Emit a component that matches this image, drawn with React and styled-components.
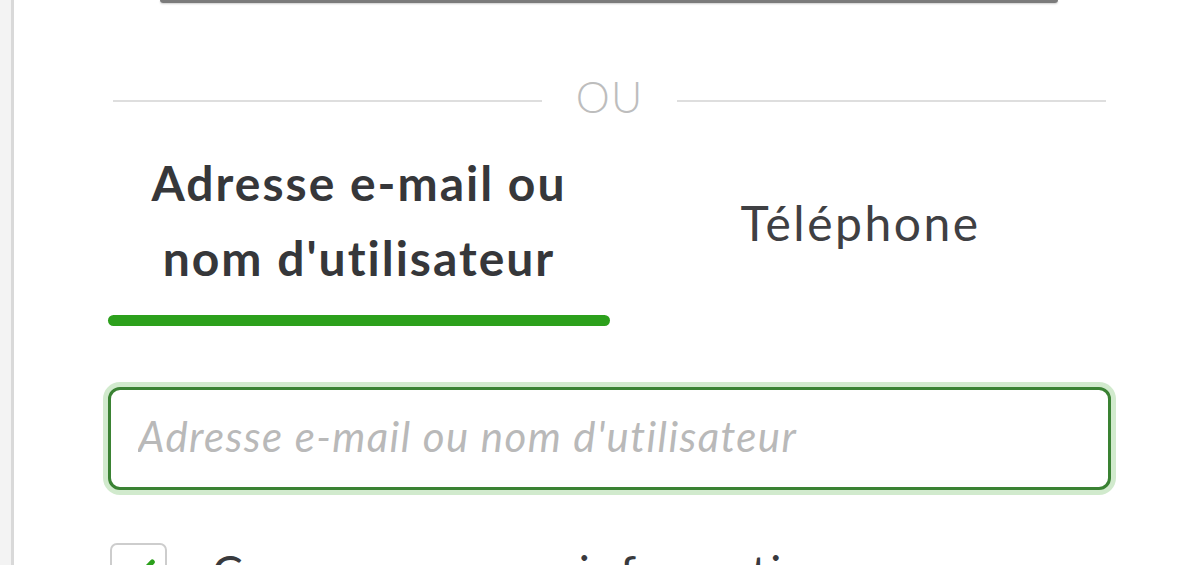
import styled, { createGlobalStyle } from "styled-components";

const GlobalStyle = createGlobalStyle`
  html, body {
    margin: 0;
    padding: 0;
    background: #ffffff;
    font-family: "Lato", "Noto Sans", sans-serif;
    color: #393a3d;
  }
`;

const Page = styled.div`
  display: flex;
  height: 565px;
  overflow: hidden;
`;

const Rail = styled.div`
  width: 11px;
  flex-shrink: 0;
  background: #f3f3f3;
  border-right: 3px solid #d9d9d9;
`;

const Panel = styled.div`
  flex: 1;
  display: block;
  padding: 0 89px 0 94px;
`;

const SsoButton = styled.div`
  height: 0;
  margin: 0 53px 0 52px;
  border-bottom: 3px solid #7b7b7b;
  border-radius: 0 0 8px 8px;
  box-shadow: 0 1px 2px rgba(0, 0, 0, 0.2);
`;

const Divider = styled.div`
  display: flex;
  align-items: center;
  gap: 34px;
  margin: 68px 5px 0 5px;
`;

const Rule = styled.div`
  flex: 1;
  height: 2px;
  background: #dedede;
`;

const DividerText = styled.span`
  font-size: 43px;
  line-height: 52px;
  margin-bottom: 8px;
  color: #bdbdbd;
  font-weight: 300;
  letter-spacing: 1px;
`;

const Tabs = styled.div`
  display: grid;
  grid-template-columns: 502px 1fr;
  margin-top: 14px;
`;

const Tab = styled.div`
  display: flex;
  flex-direction: column;
  align-items: center;
`;

const TabLabel = styled.div`
  height: 150px;
  box-sizing: border-box;
  display: flex;
  align-items: center;
  justify-content: center;
  text-align: center;
  font-size: 48px;
  line-height: 75px;
  font-weight: ${(p) => (p.$active ? 700 : 400)};
  letter-spacing: ${(p) => (p.$active ? "2px" : "2.5px")};
  color: ${(p) => (p.$active ? "#36373a" : "#3f4043")};
  padding-top: ${(p) => (p.$active ? "0" : "5px")};
`;

const TabBar = styled.div`
  align-self: stretch;
  height: 11px;
  margin-top: 20px;
  border-radius: 6px;
  background: ${(p) => (p.$active ? "#2ca01c" : "transparent")};
`;

const Field = styled.input`
  display: block;
  box-sizing: border-box;
  width: 100%;
  height: 103px;
  margin-top: 61px;
  padding: 0 27px 5px;
  border: 3px solid #3a8233;
  border-radius: 12px;
  box-shadow: 0 0 0 5px rgba(44, 160, 28, 0.22);
  outline: none;
  font-family: "Lato", "Noto Sans", sans-serif;
  font-size: 42px;
  letter-spacing: 1.4px;
  color: #393a3d;
  background: #fff;

  &::placeholder {
    color: #b9b9b9;
    font-style: italic;
  }
`;

const CheckRow = styled.label`
  display: flex;
  align-items: flex-start;
  gap: 45px;
  margin-top: 53px;
  margin-left: 2px;
`;

const Box = styled.span`
  width: 57px;
  height: 57px;
  flex-shrink: 0;
  box-sizing: border-box;
  border: 2px solid #cdcdcd;
  border-radius: 7px;
  display: flex;
  align-items: center;
  justify-content: center;
`;

const CheckText = styled.span`
  font-size: 46px;
  line-height: 58px;
  letter-spacing: 2.5px;
  word-spacing: 10px;
  color: #393a3d;
`;

export default function App() {
  return (
    <>
      <GlobalStyle />
      <Page>
        <Rail />
        <Panel>
          <SsoButton />
          <Divider>
            <Rule />
            <DividerText>OU</DividerText>
            <Rule />
          </Divider>
          <Tabs>
            <Tab>
              <TabLabel $active>
                Adresse e-mail ou
                <br />
                nom d'utilisateur
              </TabLabel>
              <TabBar $active />
            </Tab>
            <Tab>
              <TabLabel>Téléphone</TabLabel>
              <TabBar />
            </Tab>
          </Tabs>
          <Field placeholder="Adresse e-mail ou nom d'utilisateur" />
          <CheckRow>
            <Box>
              <svg width="40" height="40" viewBox="0 0 24 24" fill="none">
                <path
                  d="M4 12.5l5 5L20 6"
                  stroke="#2ca01c"
                  strokeWidth="3"
                  strokeLinecap="round"
                  strokeLinejoin="round"
                />
              </svg>
            </Box>
            <CheckText>Conserver mes informations</CheckText>
          </CheckRow>
        </Panel>
      </Page>
    </>
  );
}
